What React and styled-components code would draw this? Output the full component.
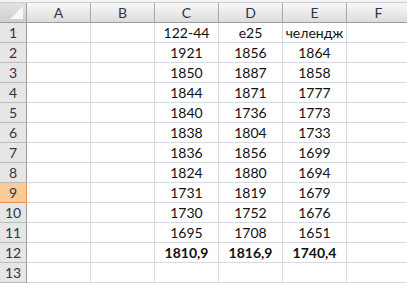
import React from 'react';
import styled, { createGlobalStyle } from 'styled-components';

const columns = ['A', 'B', 'C', 'D', 'E', 'F'];

const rows = [
  ['', '', '122-44', 'e25', 'челендж', ''],
  ['', '', '1921', '1856', '1864', ''],
  ['', '', '1850', '1887', '1858', ''],
  ['', '', '1844', '1871', '1777', ''],
  ['', '', '1840', '1736', '1773', ''],
  ['', '', '1838', '1804', '1733', ''],
  ['', '', '1836', '1856', '1699', ''],
  ['', '', '1824', '1880', '1694', ''],
  ['', '', '1731', '1819', '1679', ''],
  ['', '', '1730', '1752', '1676', ''],
  ['', '', '1695', '1708', '1651', ''],
  ['', '', '1810,9', '1816,9', '1740,4', ''],
  ['', '', '', '', '', ''],
];

const GlobalStyle = createGlobalStyle`
  body {
    margin: 0;
    background: #ffffff;
    font-family: 'Lato', 'Open Sans', sans-serif;
    overflow: hidden;
  }
`;

const Window = styled.div`
  width: 407px;
  height: 286px;
  overflow: hidden;
  background: #ffffff;
`;

const TopStrip = styled.div`
  height: 2px;
  background: #f4f4f4;
  border-bottom: 1px solid #c9cdd6;
`;

const Sheet = styled.div`
  display: grid;
  grid-template-columns: 27px repeat(6, 64px);
  grid-auto-rows: 20px;
`;

const Corner = styled.div`
  box-sizing: border-box;
  background: linear-gradient(#e2e2e2, #cfcfcf);
  border-right: 1px solid #9d9d9d;
  border-bottom: 1px solid #9d9d9d;
  display: flex;
  align-items: flex-end;
  justify-content: flex-end;
  padding: 0 3px 3px 0;
`;

const ColHeader = styled.div`
  box-sizing: border-box;
  background: linear-gradient(#f8f8f8, #e9e9e9 55%, #dcdcdc);
  border-right: 1px solid #a8a8a8;
  border-bottom: 1px solid #9d9d9d;
  display: flex;
  align-items: center;
  justify-content: center;
  font-family: 'Lato', sans-serif;
  font-size: 14px;
  color: #2d3644;
`;

const RowHeader = styled.div`
  box-sizing: border-box;
  background: ${(p) => (p.$active ? '#f8ca98' : '#e6e6e6')};
  border-right: 1px solid ${(p) => (p.$active ? '#ef9048' : '#9d9d9d')};
  border-bottom: 1px solid ${(p) => (p.$active ? '#ef9048' : '#bcbcbc')};
  display: flex;
  align-items: center;
  justify-content: center;
  font-size: 14px;
  color: #2d3644;
`;

const Cell = styled.div`
  box-sizing: border-box;
  border-right: 1px solid #d3d8e2;
  border-bottom: 1px solid #d3d8e2;
  display: flex;
  align-items: center;
  justify-content: center;
  font-size: 14px;
  font-weight: ${(p) => (p.$bold ? 700 : 400)};
  color: #111111;
  white-space: nowrap;
  overflow: hidden;
`;

function CornerMark() {
  return (
    <svg width="13" height="13" viewBox="0 0 13 13">
      <polygon points="13,0 13,13 0,13" fill="#f7f7f7" />
    </svg>
  );
}

export default function App() {
  return (
    <Window>
      <GlobalStyle />
      <TopStrip />
      <Sheet>
        <Corner>
          <CornerMark />
        </Corner>
        {columns.map((c) => (
          <ColHeader key={c}>{c}</ColHeader>
        ))}
        {rows.map((row, i) => (
          <React.Fragment key={i}>
            <RowHeader $active={i === 8}>{i + 1}</RowHeader>
            {row.map((v, j) => (
              <Cell key={j} $bold={i === 11}>
                {v}
              </Cell>
            ))}
          </React.Fragment>
        ))}
      </Sheet>
    </Window>
  );
}
